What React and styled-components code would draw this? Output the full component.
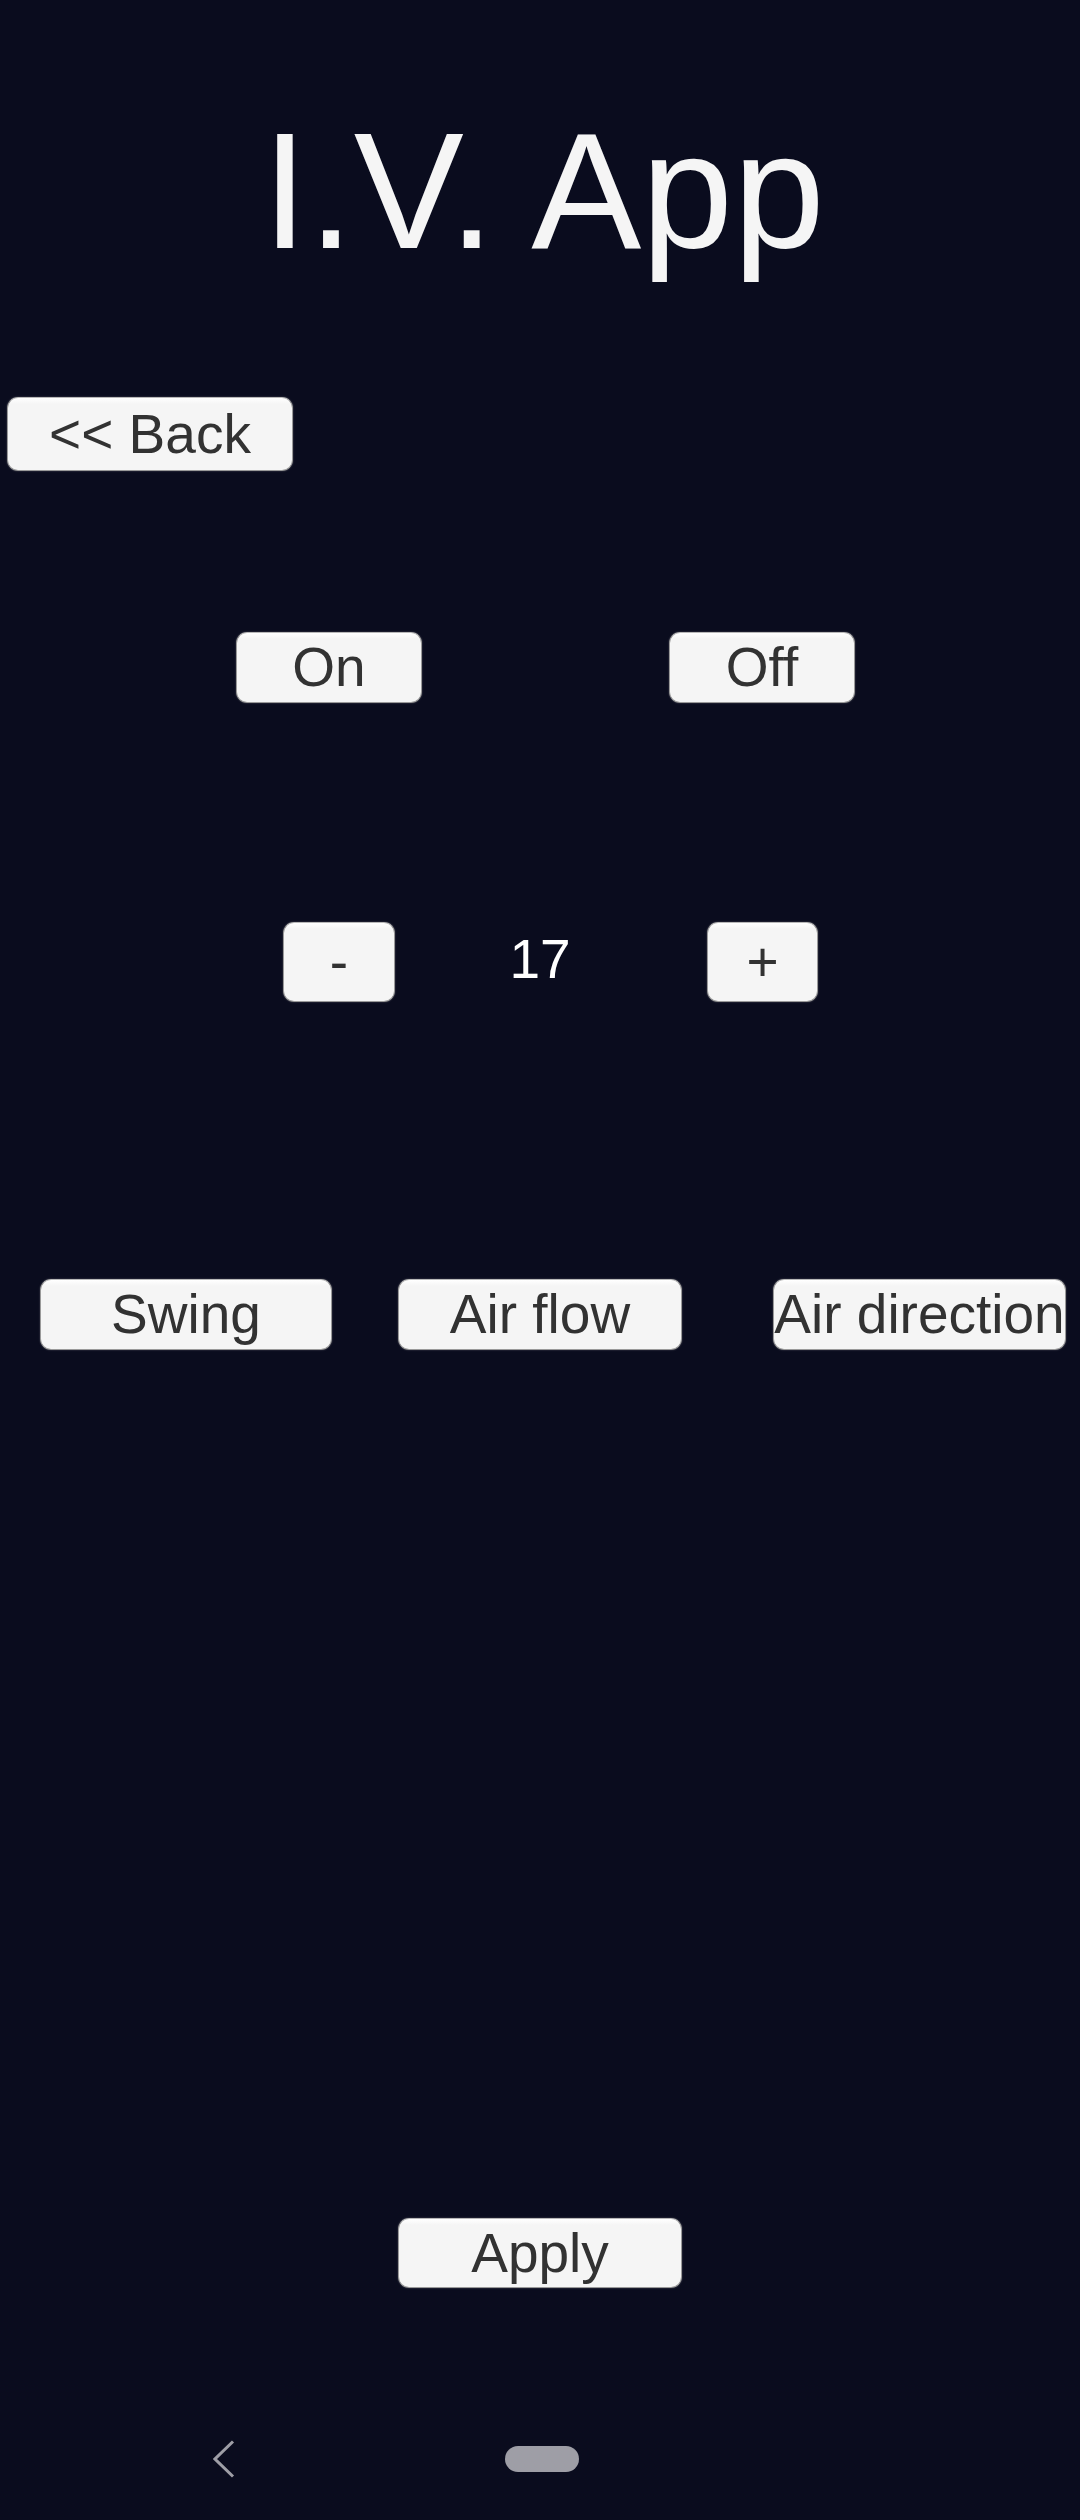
import React from 'react';
import styled, { createGlobalStyle } from 'styled-components';

const GlobalStyle = createGlobalStyle`
    html, body {
        margin: 0;
        padding: 0;
        background: #0a0c1e;
    }
    * {
        box-sizing: border-box;
    }
`;

const Screen = styled.div`
    width: 1080px;
    height: 2520px;
    display: flex;
    flex-direction: column;
    background-color: #0a0c1e;
    font-family: "Liberation Sans", Arial, sans-serif;
    overflow: hidden;
`;

const Title = styled.h1`
    margin: 111px 0 0;
    height: 160px;
    font-size: 165px;
    line-height: 160px;
    font-weight: 400;
    text-align: center;
    color: #f5f5f5;
    padding-left: 7px;
`;

//each row gets its own top gap and left inset
const Row = styled.div`
    display: flex;
    align-items: center;
    margin-top: ${p => p.$top}px;
    padding-left: ${p => p.$left || 0}px;
    height: ${p => p.$h}px;
`;

const UnityButton = styled.button`
    display: flex;
    align-items: center;
    justify-content: center;
    width: ${p => p.$w}px;
    height: ${p => p.$h}px;
    margin-left: ${p => p.$ml || 0}px;
    padding: 0;
    border: 1.5px solid #9a9a9a;
    border-top-color: #b8b8b8;
    border-radius: 11px;
    background: linear-gradient(#ffffff 0, #f5f5f5 6px, #f5f5f5 100%);
    box-shadow: 0 0 2px rgba(200, 200, 200, 0.35);
    color: #323232;
    font-family: "Liberation Sans", Arial, sans-serif;
    font-size: 55px;
    line-height: 1;
    white-space: nowrap;
    overflow: visible;
    cursor: pointer;
`;

const Value = styled.div`
    width: 290px;
    text-align: center;
    color: #ffffff;
    font-size: 55px;
    line-height: 1;
    padding-bottom: 6px;
`;

const NavBar = styled.div`
    display: flex;
    align-items: center;
    margin-top: 153px;
    height: 36px;
    padding-left: 213px;
`;

const HomePill = styled.div`
    width: 74px;
    height: 26px;
    margin-left: 270px;
    border-radius: 13px;
    background-color: #9e9ea6;
`;

const BackChevron = () => (
    <svg width="22" height="38" viewBox="0 0 22 38">
        <polyline points="20,1.5 2,19 20,36.5" fill="none" stroke="#9e9ea6" strokeWidth="3" />
    </svg>
);

const App = () => {
    return (
        <Screen>
            <GlobalStyle />
            <Title>I.V. App</Title>

            <Row $top={126} $left={7} $h={74}>
                <UnityButton $w={286} $h={74}>&lt;&lt; Back</UnityButton>
            </Row>

            <Row $top={161} $left={236} $h={71}>
                <UnityButton $w={186} $h={71}>On</UnityButton>
                <UnityButton $w={186} $h={71} $ml={247}>Off</UnityButton>
            </Row>

            <Row $top={219} $left={283} $h={80}>
                <UnityButton $w={112} $h={80}>-</UnityButton>
                <Value>17</Value>
                <UnityButton $w={111} $h={80} $ml={22}>+</UnityButton>
            </Row>

            <Row $top={277} $left={40} $h={71}>
                <UnityButton $w={292} $h={71}>Swing</UnityButton>
                <UnityButton $w={284} $h={71} $ml={66}>Air flow</UnityButton>
                <UnityButton $w={293} $h={71} $ml={91}>Air direction</UnityButton>
            </Row>

            <Row $top={868} $left={398} $h={70}>
                <UnityButton $w={284} $h={70}>Apply</UnityButton>
            </Row>

            <NavBar>
                <BackChevron />
                <HomePill />
            </NavBar>
        </Screen>
    );
}

export default App;
